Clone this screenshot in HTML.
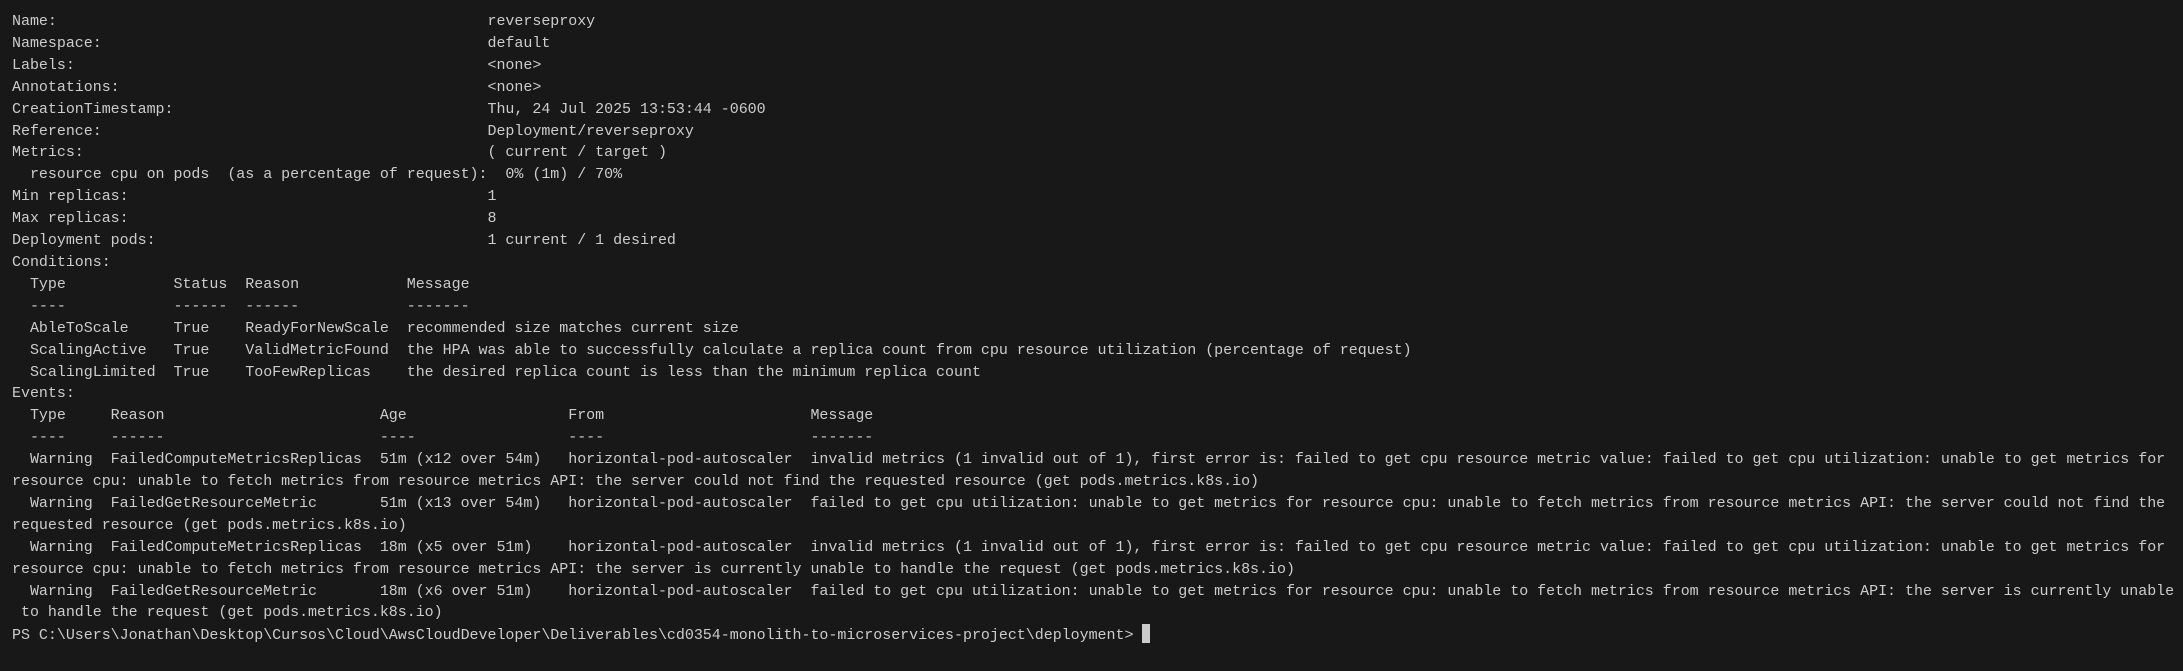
<!DOCTYPE html>
<html><head><meta charset="utf-8"><style>
html,body{margin:0;padding:0;background:#181818;width:2183px;height:671px;overflow:hidden}
pre{margin:0;padding:11px 0 0 12px;font-family:"Liberation Mono",monospace;font-size:15px;letter-spacing:-0.03px;line-height:21.9px;color:#cccccc;white-space:pre}
.cur{display:inline-block;width:8px;height:19px;background:#cccccc;vertical-align:-4px;margin-left:9px}
</style></head><body><pre>Name:                                                reverseproxy
Namespace:                                           default
Labels:                                              &lt;none&gt;
Annotations:                                         &lt;none&gt;
CreationTimestamp:                                   Thu, 24 Jul 2025 13:53:44 -0600
Reference:                                           Deployment/reverseproxy
Metrics:                                             ( current / target )
  resource cpu on pods  (as a percentage of request):  0% (1m) / 70%
Min replicas:                                        1
Max replicas:                                        8
Deployment pods:                                     1 current / 1 desired
Conditions:
  Type            Status  Reason            Message
  ----            ------  ------            -------
  AbleToScale     True    ReadyForNewScale  recommended size matches current size
  ScalingActive   True    ValidMetricFound  the HPA was able to successfully calculate a replica count from cpu resource utilization (percentage of request)
  ScalingLimited  True    TooFewReplicas    the desired replica count is less than the minimum replica count
Events:
  Type     Reason                        Age                  From                       Message
  ----     ------                        ----                 ----                       -------
  Warning  FailedComputeMetricsReplicas  51m (x12 over 54m)   horizontal-pod-autoscaler  invalid metrics (1 invalid out of 1), first error is: failed to get cpu resource metric value: failed to get cpu utilization: unable to get metrics for
resource cpu: unable to fetch metrics from resource metrics API: the server could not find the requested resource (get pods.metrics.k8s.io)
  Warning  FailedGetResourceMetric       51m (x13 over 54m)   horizontal-pod-autoscaler  failed to get cpu utilization: unable to get metrics for resource cpu: unable to fetch metrics from resource metrics API: the server could not find the
requested resource (get pods.metrics.k8s.io)
  Warning  FailedComputeMetricsReplicas  18m (x5 over 51m)    horizontal-pod-autoscaler  invalid metrics (1 invalid out of 1), first error is: failed to get cpu resource metric value: failed to get cpu utilization: unable to get metrics for
resource cpu: unable to fetch metrics from resource metrics API: the server is currently unable to handle the request (get pods.metrics.k8s.io)
  Warning  FailedGetResourceMetric       18m (x6 over 51m)    horizontal-pod-autoscaler  failed to get cpu utilization: unable to get metrics for resource cpu: unable to fetch metrics from resource metrics API: the server is currently unable
 to handle the request (get pods.metrics.k8s.io)
PS C:\Users\Jonathan\Desktop\Cursos\Cloud\AwsCloudDeveloper\Deliverables\cd0354-monolith-to-microservices-project\deployment&gt;<span class="cur"></span></pre></body></html>
